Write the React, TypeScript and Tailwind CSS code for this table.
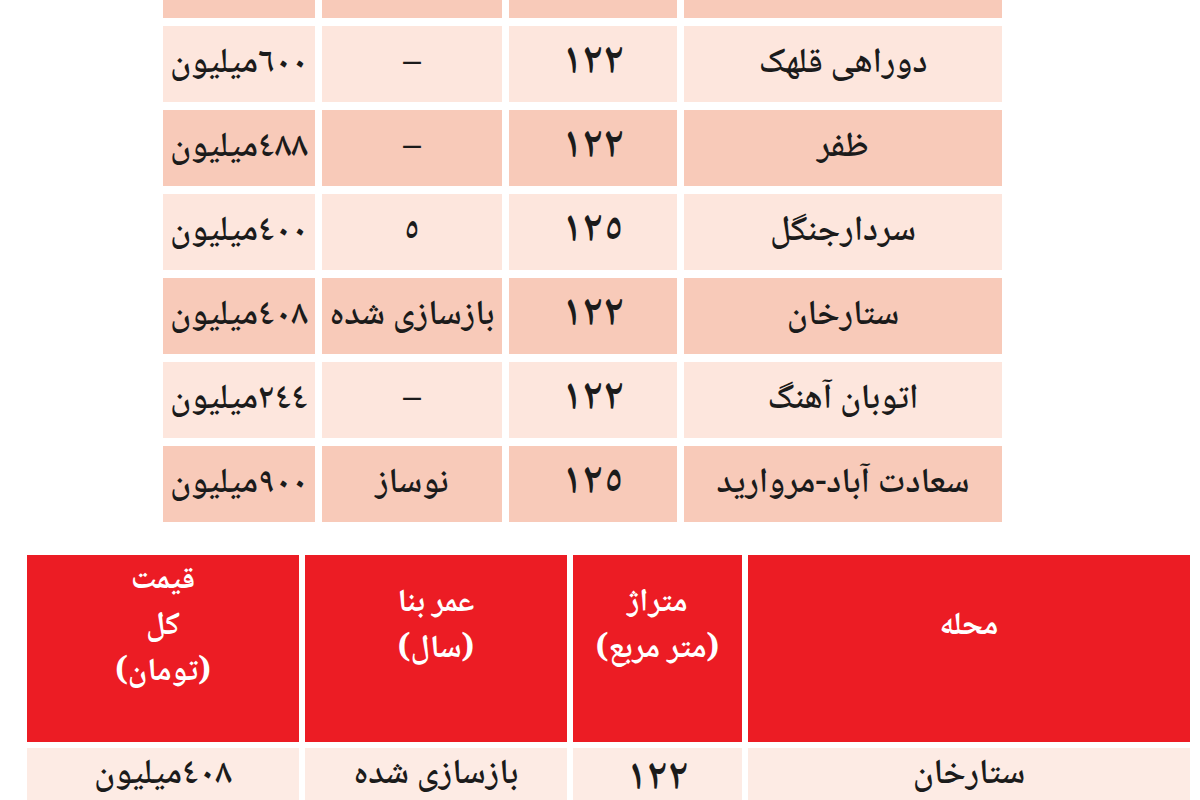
import React from 'react';

const font = { fontFamily: '"Noto Naskh Arabic", "Noto Sans Arabic", "DejaVu Sans", sans-serif' };

// top table rows, listed right-to-left: neighbourhood, area, age, price
const rows = [
  ['دوراهی قلهک', '١٢٢', '–', '٦٠٠میلیون'],
  ['ظفر', '١٢٢', '–', '٤٨٨میلیون'],
  ['سردارجنگل', '١٢٥', '٥', '٤٠٠میلیون'],
  ['ستارخان', '١٢٢', 'بازسازی شده', '٤٠٨میلیون'],
  ['اتوبان آهنگ', '١٢٢', '–', '٢٤٤میلیون'],
  ['سعادت آباد-مروارید', '١٢٥', 'نوساز', '٩٠٠میلیون'],
];

const Cell = ({ children, dark, num }: { children?: React.ReactNode; dark?: boolean; num?: boolean }) => (
  <div
    className={`flex items-center justify-center h-[76px] leading-none whitespace-nowrap font-semibold text-[#1b1b1b] ${
      num ? 'text-[44px]' : 'text-[35px]'
    } ${dark ? 'bg-[#f8cab9]' : 'bg-[#fde6dd]'}`}
  >
    {children}
  </div>
);

const HeadCell = ({ lines }: { lines: string[] }) => (
  <div className="flex flex-col items-center justify-center h-[187px] pb-[43px] bg-[#ec1c24] text-white font-bold text-[32px] leading-[46px]">
    {lines.map((l) => (
      <span key={l}>{l}</span>
    ))}
  </div>
);

export default function App() {
  return (
    <div className="w-[1200px] h-[800px] overflow-hidden bg-white" style={font}>
      {/* upper table, cut off at the top */}
      <div dir="rtl" className="ml-[163px] w-[839px] grid grid-cols-[318px_168px_180px_152px] gap-x-[7px] gap-y-[8px]">
        <div className="h-[18px] bg-[#f8cab9]" />
        <div className="h-[18px] bg-[#f8cab9]" />
        <div className="h-[18px] bg-[#f8cab9]" />
        <div className="h-[18px] bg-[#f8cab9]" />
        {rows.map((r, i) =>
          r.map((c, j) => (
            <Cell key={`${i}-${j}`} dark={i % 2 === 1} num={j === 1}>
              {c}
            </Cell>
          ))
        )}
      </div>

      {/* lower table, cut off at the bottom */}
      <div dir="rtl" className="mt-[33px] ml-[27px] w-[1163px] grid grid-cols-[442px_169px_262px_272px] gap-x-[6px] gap-y-[6px]">
        <HeadCell lines={['محله']} />
        <HeadCell lines={['متراژ', '(متر مربع)']} />
        <HeadCell lines={['عمر بنا', '(سال)']} />
        <HeadCell lines={['قیمت', 'کل', '(تومان)']} />
        <div className="flex items-start justify-center h-[60px] pt-[10px] bg-[#fdebe4] text-[35px] leading-none font-semibold text-[#1b1b1b]">ستارخان</div>
        <div className="flex items-start justify-center h-[60px] pt-[10px] bg-[#fdebe4] text-[44px] leading-none font-semibold text-[#1b1b1b]">١٢٢</div>
        <div className="flex items-start justify-center h-[60px] pt-[10px] bg-[#fdebe4] text-[35px] leading-none font-semibold text-[#1b1b1b]">بازسازی شده</div>
        <div className="flex items-start justify-center h-[60px] pt-[10px] bg-[#fdebe4] text-[35px] leading-none font-semibold text-[#1b1b1b]">٤٠٨میلیون</div>
      </div>
    </div>
  );
}
